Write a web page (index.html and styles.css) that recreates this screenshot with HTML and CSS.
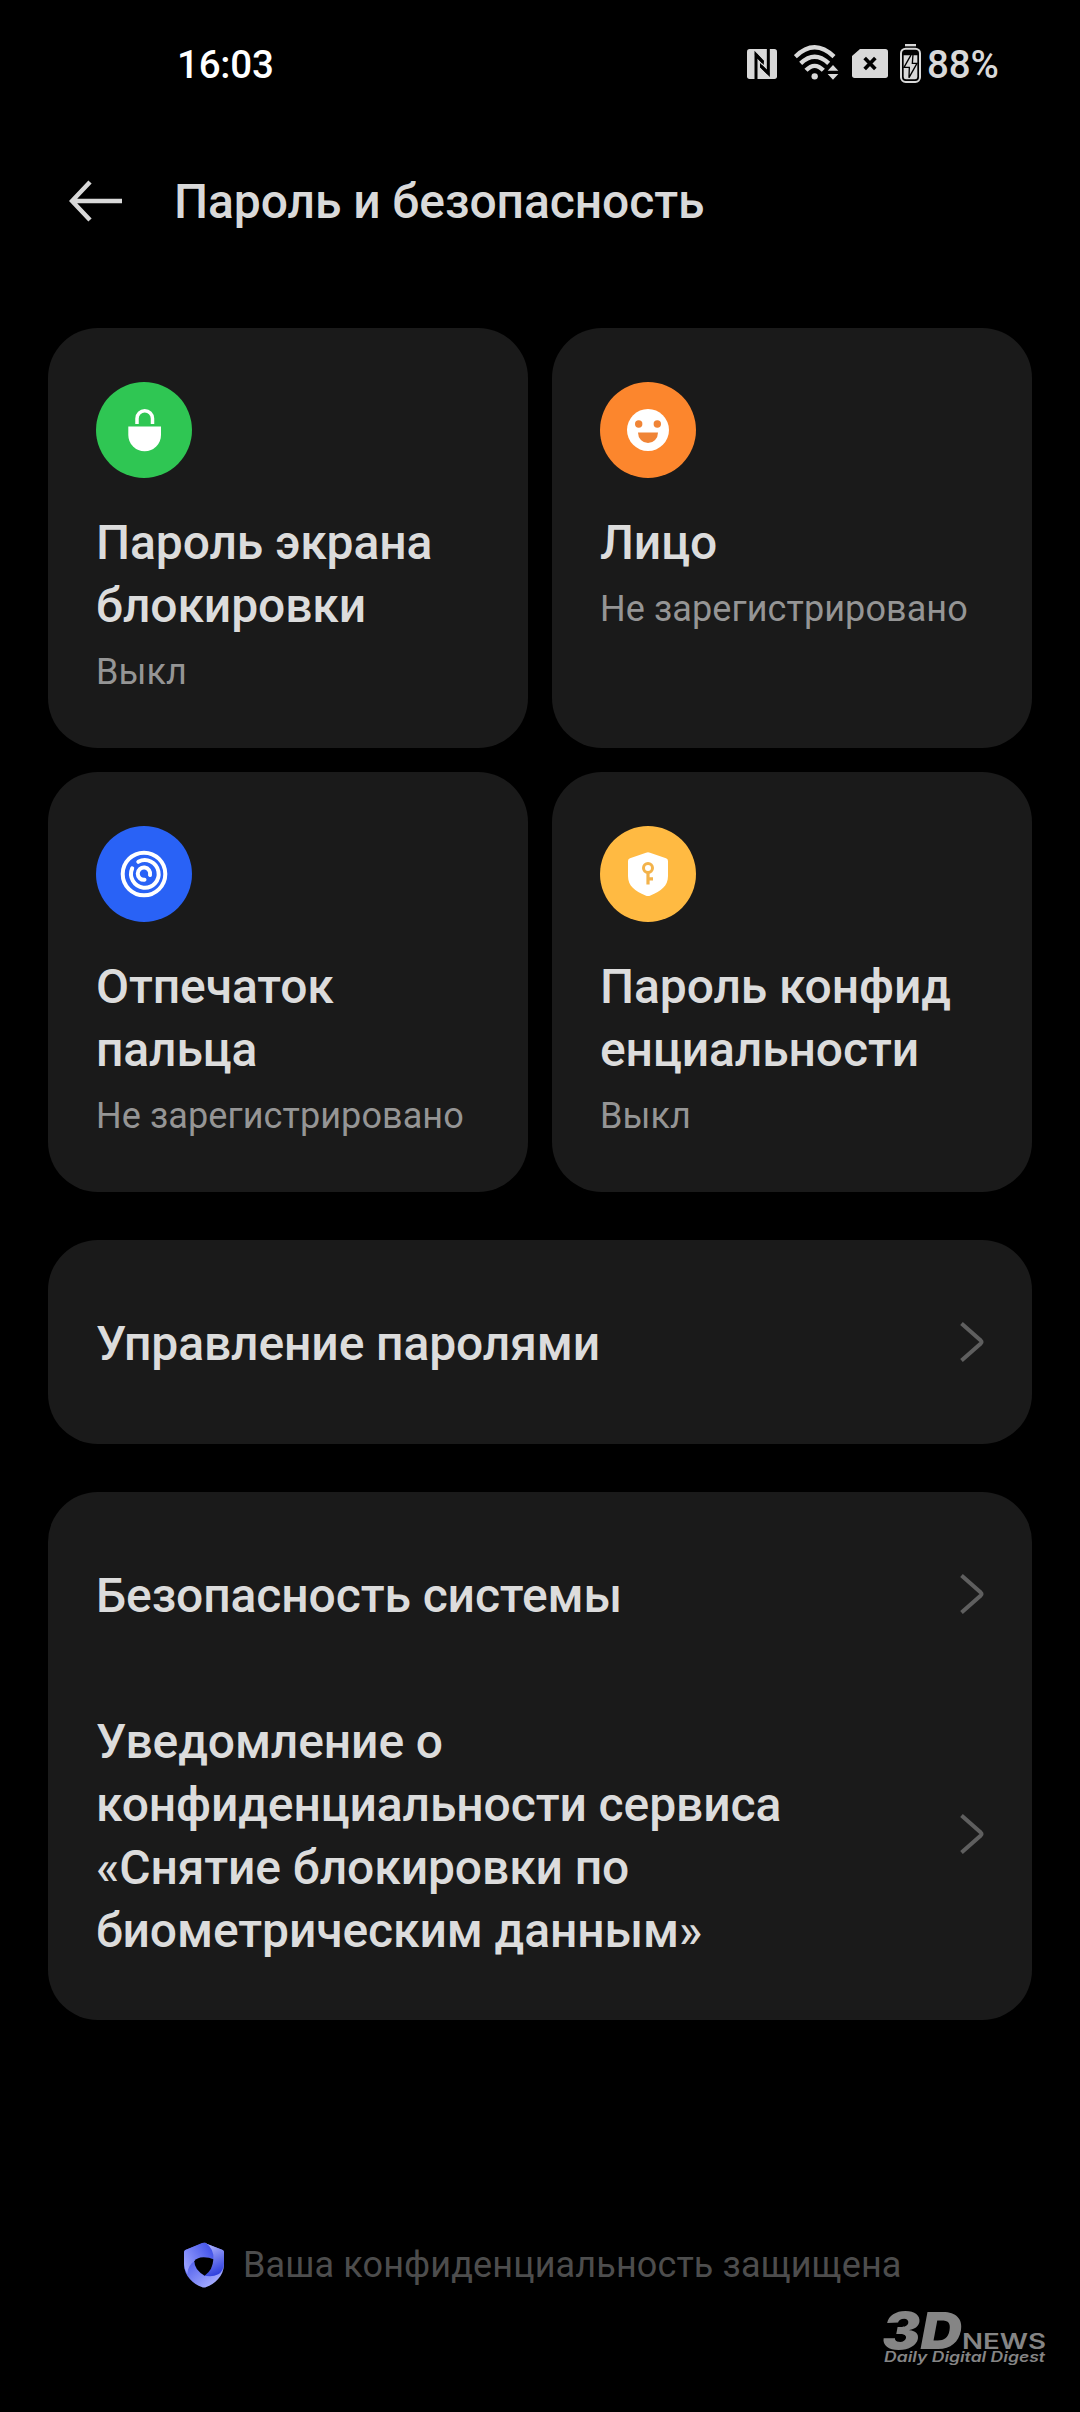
FILE: index.html
```html
<!DOCTYPE html>
<html lang="ru">
<head>
<meta charset="utf-8">
<title>Пароль и безопасность</title>
<link rel="stylesheet" href="styles.css">
</head>
<body>
<div class="statusbar">
  <span class="clock">16:03</span>
  <div class="indicators">
    <svg class="nfc" width="30" height="30" viewBox="0 0 90 90">
      <rect width="90" height="90" rx="8" fill="#d9d9d9"/>
      <path d="M27 90V17L48 40M64 0V73L42 51" fill="none" stroke="#000" stroke-width="9"/>
      <path d="M22.500 14h8l20 21v13L30 27z M68.500 76h-8L39 55V42l22 22z" fill="#000"/>
    </svg>
    <svg class="wifi" width="45" height="35" viewBox="0 0 135 105">
      <g fill="none" stroke="#d9d9d9" stroke-width="13">
        <path d="M4 35Q62-21 120 35"/>
        <path d="M20 55Q62 15 104 55"/>
        <path d="M36 76Q62 49 88 76"/>
      </g>
      <circle cx="62" cy="94" r="9.500" fill="#d9d9d9"/>
      <path d="M117 60l16 17h-32zM117 104l16-17h-32z" fill="#d9d9d9"/>
    </svg>
    <svg class="sim" width="36" height="29" viewBox="0 0 108 87">
      <path d="M24 0H100Q108 0 108 8V79Q108 87 100 87H8Q0 87 0 79V21Z" fill="#d9d9d9"/>
      <path d="M38 27L70 60M70 27L38 60" stroke="#000" stroke-width="11"/>
    </svg>
    <svg class="battery" width="21" height="39" viewBox="0 0 63 117">
      <path d="M15 0H48V7H15Z" fill="#d9d9d9"/>
      <rect x="3" y="14" width="57" height="100" rx="14" fill="none" stroke="#d9d9d9" stroke-width="6"/>
      <path d="M11 34H52V99Q52 106 45 106H18Q11 106 11 99Z" fill="#d9d9d9"/>
      <path d="M34 31L12 70H28L27 101L51 58H37L39 31Z" fill="#d9d9d9" stroke="#000" stroke-width="4"/>
    </svg>
    <span class="charge">88%</span>
  </div>
</div>

<header class="header">
  <svg class="back" width="54" height="42" viewBox="0 0 54 42">
    <path d="M53 21H3M21 2L3 21L21 40" fill="none" stroke="#d9d9d9" stroke-width="4.500"/>
  </svg>
  <h1 class="title">Пароль и безопасность</h1>
</header>

<main class="content">
  <section class="tiles">
    <article class="tile">
      <svg class="badge" width="96" height="96" viewBox="0 0 96 96">
        <circle cx="48" cy="48" r="48" fill="#2fc653"/>
        <path d="M41 42V36.500A7.750 7.750 0 0 1 56.500 36.500V42" fill="none" stroke="#fff" stroke-width="3.500"/>
        <path d="M32.300 44.500H65V53A16.350 16.350 0 0 1 32.300 53Z" fill="#fff"/>
      </svg>
      <h2 class="name">Пароль экрана<br>блокировки</h2>
      <p class="state">Выкл</p>
    </article>
    <article class="tile">
      <svg class="badge" width="96" height="96" viewBox="0 0 96 96">
        <circle cx="48" cy="48" r="48" fill="#fc862d"/>
        <circle cx="48" cy="48" r="21" fill="#fff"/>
        <circle cx="38.700" cy="42" r="3.700" fill="#f08436"/>
        <circle cx="57.300" cy="42" r="3.700" fill="#f08436"/>
        <path d="M38 50.500H58A10 10.500 0 0 1 38 50.500Z" fill="#f08436"/>
      </svg>
      <h2 class="name">Лицо</h2>
      <p class="state">Не зарегистрировано</p>
    </article>
    <article class="tile">
      <svg class="badge" width="96" height="96" viewBox="0 0 96 96">
        <circle cx="48" cy="48" r="48" fill="#2962f6"/>
        <g fill="none" stroke="#fff" stroke-width="4" stroke-linecap="round">
          <circle cx="48" cy="48" r="21.300"/>
          <path d="M42.300 35.800A13.800 13.800 0 1 1 36.200 42.400"/>
          <path d="M48.500 53.800A6.200 6.200 0 1 1 54 49"/>
        </g>
      </svg>
      <h2 class="name">Отпечаток<br>пальца</h2>
      <p class="state">Не зарегистрировано</p>
    </article>
    <article class="tile">
      <svg class="badge" width="96" height="96" viewBox="0 0 96 96">
        <circle cx="48" cy="48" r="48" fill="#ffba42"/>
        <path d="M46 26.700Q48 25.800 50 26.700L66 32.300Q68 33 68 35V50C68 60 61 65 50.500 69.500Q48 70.600 45.500 69.500C35 65 28 60 28 50V35Q28 33 30 32.300Z" fill="#fff"/>
        <path d="M48 46V58.500M48 52.800H53" fill="none" stroke="#f3b34b" stroke-width="3.200"/>
        <circle cx="48" cy="42" r="4.500" fill="none" stroke="#f3b34b" stroke-width="3"/>
      </svg>
      <h2 class="name">Пароль конфид<br>енциальности</h2>
      <p class="state">Выкл</p>
    </article>
  </section>

  <section class="group">
    <div class="row">
      <span class="label">Управление паролями</span>
      <svg class="chevron" width="24" height="40" viewBox="0 0 24 40"><path d="M1.500 1.500L20.800 18.600Q22.300 20 20.800 21.400L1.500 38.500"/></svg>
    </div>
  </section>

  <section class="group">
    <div class="row">
      <span class="label">Безопасность системы</span>
      <svg class="chevron" width="24" height="40" viewBox="0 0 24 40"><path d="M1.500 1.500L20.800 18.600Q22.300 20 20.800 21.400L1.500 38.500"/></svg>
    </div>
    <div class="row row-long">
      <span class="label">Уведомление о<br>конфиденциальности сервиса<br>«Снятие блокировки по<br>биометрическим данным»</span>
      <svg class="chevron" width="24" height="40" viewBox="0 0 24 40"><path d="M1.500 1.500L20.800 18.600Q22.300 20 20.800 21.400L1.500 38.500"/></svg>
    </div>
  </section>
</main>

<footer class="footer">
  <svg class="shield" width="42" height="46" viewBox="0 0 126 138">
    <defs>
      <linearGradient id="g1" x1="0" y1=".7" x2="1" y2=".1"><stop offset="0" stop-color="#98a0ff"/><stop offset="1" stop-color="#3a4be6"/></linearGradient>
      <linearGradient id="g2" x1=".3" y1="0" x2=".6" y2="1"><stop offset="0" stop-color="#b4b8ff"/><stop offset="1" stop-color="#2b3cdc"/></linearGradient>
      <linearGradient id="g3" x1=".2" y1=".3" x2=".7" y2="1"><stop offset="0" stop-color="#4a5aec"/><stop offset="1" stop-color="#a9afff"/></linearGradient>
    </defs>
    <path d="M63 2L119 24Q123 26 123 32V66C123 104 94 126 70 135Q63 138 56 135C32 126 3 104 3 66V32Q3 26 7 24Z" fill="url(#g3)"/>
    <path d="M63 2L119 24Q123 26 123 32V66Q121 88 106 97Q84 107 60 99Q92 86 91 52L70 3Z" fill="url(#g2)"/>
    <path d="M3 32Q3 26 7 24L57 3Q63 1 69 3Q94 22 91 52Q65 38 40 54Q14 68 13 96Q3 80 3 66Z" fill="url(#g1)"/>
    <path d="M34 58Q40 47 62 46Q80 46 91 52Q90 84 65 101Q34 84 34 58Z" fill="#000"/>
  </svg>
  <span class="note">Ваша конфиденциальность защищена</span>
</footer>

<svg class="watermark" width="166" height="60" viewBox="0 0 166 60" fill="#858585">
  <text class="wm-mark" x="-1" y="38.500" textLength="80" lengthAdjust="spacingAndGlyphs">3D</text>
  <text class="wm-news" x="79" y="38.500" textLength="84" lengthAdjust="spacingAndGlyphs">NEWS</text>
  <text class="wm-tag" x="1" y="52" textLength="161" lengthAdjust="spacingAndGlyphs">Daily Digital Digest</text>
</svg>
</body>
</html>
```
FILE: styles.css
```css
* { box-sizing: border-box; }

body {
  margin: 0;
  width: 1080px;
  height: 2412px;
  position: relative;
  overflow: hidden;
  display: flex;
  flex-direction: column;
  background: #000;
  color: #dcdcdc;
  font-family: Roboto, sans-serif;
}

h1, h2, p { margin: 0; }
svg { display: block; flex: none; }

.statusbar {
  height: 128px;
  padding: 0 80px 1px 177px;
  display: flex;
  justify-content: space-between;
  align-items: center;
}
.clock {
  padding-top: 2px;
  color: #fff;
  font-size: 38.5px;
  font-weight: 500;
  letter-spacing: -0.2px;
}
.indicators {
  display: flex;
  align-items: center;
}
.nfc { margin-right: 17px; }
.wifi { margin-right: 13px; margin-top: -3px; }
.sim { margin-right: 12px; }
.battery { margin-right: 6px; }
.charge {
  width: 73px;
  padding-top: 1px;
  color: #d9d9d9;
  font-size: 38.5px;
  font-weight: 500;
  letter-spacing: -0.1px;
}

.header {
  height: 200px;
  padding: 42px 70px 0;
  display: flex;
  align-items: flex-start;
}
.back { margin: 10px 51px 0 -1px; }
.title {
  color: #d9d9d9;
  font-size: 48px;
  font-weight: 500;
  line-height: 63px;
  letter-spacing: -0.07px;
}

.content {
  padding: 0 48px;
  display: flex;
  flex-direction: column;
  gap: 48px;
}
.tiles {
  display: grid;
  grid-template-columns: 1fr 1fr;
  grid-auto-rows: 420px;
  gap: 24px;
}
.tile {
  padding: 54px 48px 0;
  border-radius: 50px;
  background: #1a1a1a;
}
.name {
  margin-top: 33px;
  font-size: 48px;
  font-weight: 500;
  line-height: 63px;
  letter-spacing: -0.1px;
  white-space: nowrap;
}
.state {
  margin-top: 14px;
  color: #959595;
  font-size: 36px;
  line-height: 42px;
  letter-spacing: 0.09px;
  white-space: nowrap;
}

.group {
  border-radius: 50px;
  background: #1a1a1a;
}
.row {
  height: 204px;
  padding: 0 48px;
  display: flex;
  justify-content: space-between;
  align-items: center;
}
.row-long {
  height: 324px;
  padding-bottom: 48px;
}
.label {
  padding-top: 2px;
  font-size: 48px;
  font-weight: 500;
  line-height: 63px;
  letter-spacing: -0.1px;
}
.row-long .label { padding-top: 4px; }
.chevron path {
  fill: none;
  stroke: #5f5f5f;
  stroke-width: 4;
}

.footer {
  margin-top: 222px;
  padding-left: 183px;
  display: flex;
  align-items: center;
  gap: 18px;
}
.note {
  color: #4d4d4d;
  font-size: 36px;
  line-height: 46px;
  letter-spacing: 0.13px;
}

.watermark {
  position: absolute;
  left: 883px;
  top: 2310px;
  overflow: visible;
}
.wm-mark { font: italic 900 51px Inter, sans-serif; }
.wm-news { font: 600 21px Inter, sans-serif; }
.wm-tag { font: italic 600 14px Inter, sans-serif; }
```
